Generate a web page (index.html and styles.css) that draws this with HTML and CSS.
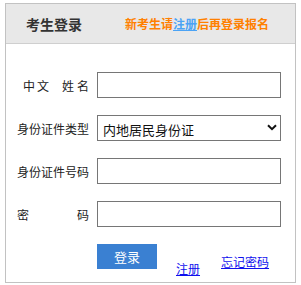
FILE: index.html
```html
<!DOCTYPE html>
<html lang="zh">
<head>
<meta charset="utf-8">
<link rel="stylesheet" href="styles.css">
</head>
<body>
<div class="box">
  <div class="head">
    <span class="title">考生登录</span>
    <span class="notice">新考生请<a class="reg-top" href="#">注册</a>后再登录报名</span>
  </div>
  <form class="form">
    <div class="row">
      <label class="lbl">中<span class="gap-xs"></span>文<span class="gap"></span>姓<span class="gap-s"></span>名</label>
      <input class="field" type="text">
    </div>
    <div class="row">
      <label class="lbl">身份证件类型</label>
      <div class="sel-wrap">
        <select class="field sel">
          <option>内地居民身份证</option>
        </select>
        <svg class="chev" width="10" height="7" viewBox="0 0 10 7"><path d="M1 1.2 L5 5.2 L9 1.2" fill="none" stroke="#111" stroke-width="2"/></svg>
      </div>
    </div>
    <div class="row">
      <label class="lbl">身份证件号码</label>
      <input class="field" type="text">
    </div>
    <div class="row">
      <label class="lbl">密<span class="gap-l"></span>码</label>
      <input class="field" type="password">
    </div>
    <div class="actions">
      <button class="btn" type="button">登录</button>
      <a class="link link-reg" href="#">注册</a>
      <a class="link link-forgot" href="#">忘记密码</a>
    </div>
  </form>
</div>
</body>
</html>
```
FILE: styles.css
```css
* { box-sizing: border-box; }
html, body { margin: 0; padding: 0; background: #fff; }
body {
  font-family: "Noto Sans CJK SC", "Noto Sans", sans-serif;
  padding: 3px 0 0 5px;
}
.box {
  width: 291px;
  height: 280px;
  border: 1px solid #c2c2c2;
}
.head {
  height: 40px;
  background: #e8e8e8;
  border-bottom: 1px solid #cfcfcf;
  display: flex;
  align-items: center;
  padding-left: 20px;
}
.title {
  font-size: 14px;
  font-weight: bold;
  color: #333;
  width: 99px;
}
.notice {
  font-size: 12px;
  font-weight: bold;
  color: #ff8000;
}
.reg-top { color: #4ba3f5; text-decoration: underline; }
.form {
  padding: 28px 0 0 0;
  display: flex;
  flex-direction: column;
  gap: 17px;
}
.row {
  display: flex;
  align-items: center;
  height: 26px;
}
.lbl {
  width: 83px;
  text-align: right;
  font-size: 12px;
  color: #222;
  margin-right: 8px;
  white-space: nowrap;
}
.gap-xs { display: inline-block; width: 2px; }
.gap { display: inline-block; width: 13px; }
.gap-s { display: inline-block; width: 3px; }
.gap-l { display: inline-block; width: 48px; }
.field {
  width: 184px;
  height: 26px;
  border: 1px solid #767676;
  border-radius: 0;
  background: #fff;
  margin: 0;
  padding: 0 6px;
  font-family: inherit;
  outline: none;
}
.sel-wrap { position: relative; width: 184px; height: 26px; }
.sel {
  appearance: none;
  -webkit-appearance: none;
  font-size: 13px;
  color: #111;
  padding: 2px 5px 0;
}
.chev { position: absolute; left: 170px; top: 9px; pointer-events: none; }
.actions {
  display: flex;
  align-items: flex-start;
  padding-left: 91px;
}
.btn {
  width: 60px;
  height: 25px;
  background: #3a80d2;
  color: #fff;
  border: 0;
  border-radius: 0;
  font-family: inherit;
  font-size: 13px;
  padding: 0;
}
.link { color: #1010ee; font-size: 12px; line-height: 14px; text-decoration: underline; }
.link-reg { margin: 18px 0 0 19px; }
.link-forgot { margin: 11px 0 0 21px; }
```
